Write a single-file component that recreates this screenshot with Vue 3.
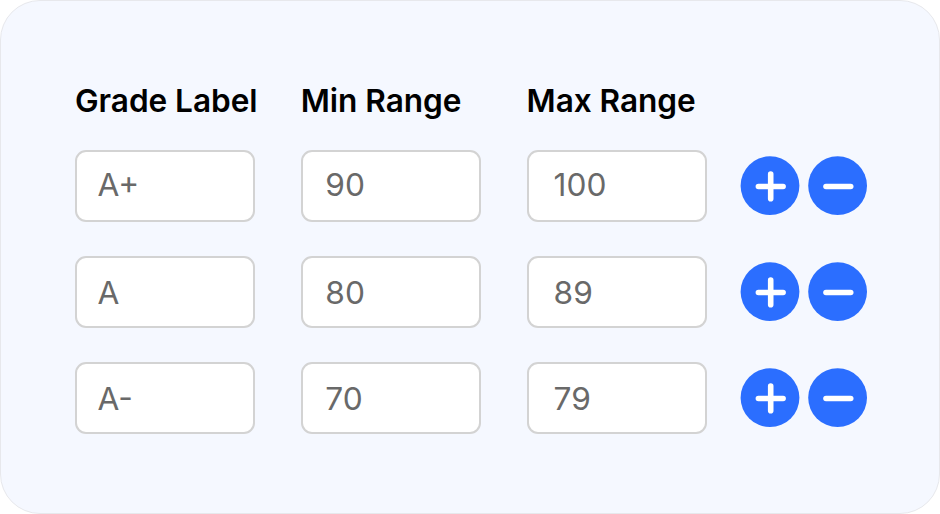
<script setup>
import {ref} from "vue";

const columns = [
    {key: 'label', title: 'Grade Label'},
    {key: 'min', title: 'Min Range'},
    {key: 'max', title: 'Max Range'}
]

const grades = ref([
    {id: 1, label: 'A+', min: '90', max: '100'},
    {id: 2, label: 'A', min: '80', max: '89'},
    {id: 3, label: 'A-', min: '70', max: '79'}
])

let nextId = 4

const addRow = (index) => {
    grades.value.splice(index + 1, 0, {id: nextId++, label: '', min: '', max: ''})
}

const removeRow = (index) => {
    if (grades.value.length > 1) {
        grades.value.splice(index, 1)
    }
}
</script>

<template>
    <div class="card">
        <div class="row head">
            <div v-for="col in columns" :key="col.key" class="title">{{col.title}}</div>
        </div>
        <div v-for="(grade, index) in grades" :key="grade.id" class="row">
            <input v-for="col in columns" :key="col.key" v-model="grade[col.key]" class="value" :class="col.key" :aria-label="col.title"/>
            <div class="actions">
                <button type="button" aria-label="Add" @click="addRow(index)">
                    <svg viewBox="0 0 60 60">
                        <circle cx="30" cy="29.7" r="29.4"/>
                        <path d="M18.4 30.5H43.1M30.7 18.1V42.8"/>
                    </svg>
                </button>
                <button type="button" aria-label="Remove" @click="removeRow(index)">
                    <svg viewBox="0 0 60 60">
                        <circle cx="29.6" cy="29.7" r="29.4"/>
                        <path d="M18 30.5H42.7"/>
                    </svg>
                </button>
            </div>
        </div>
    </div>
</template>

<style>
body {
    margin: 0;
    background: #fff;
}
</style>

<style scoped>
.card {
    box-sizing: border-box;
    width: 940px;
    height: 514px;
    padding: 79px 0 0 74px;
    border: 1px solid #e7e8ec;
    border-radius: 40px;
    background: #f5f8ff;
    font-family: Inter, sans-serif;
}
.row {
    display: grid;
    grid-template-columns: 180.4px 180.4px 180.4px auto;
    column-gap: 45.4px;
    height: 72px;
    margin-bottom: 34px;
}
.head {
    height: 42px;
    margin-bottom: 28px;
}
.title {
    font-size: 31.6px;
    font-weight: 600;
    line-height: 42px;
    letter-spacing: -0.05px;
    white-space: nowrap;
    color: #000;
}
.value {
    box-sizing: border-box;
    width: 100%;
    height: 72px;
    padding: 1px 0 0 20.5px;
    border: 2px solid #d3d3d3;
    border-radius: 11px;
    outline: none;
    background: #fff;
    font-family: inherit;
    font-size: 31.7px;
    color: #696969;
}
.head + .row .value {
    padding-top: 0;
    padding-bottom: 3px;
}
.value.min {
    padding-left: 22.5px;
}
.value.max {
    padding-left: 25px;
}
.actions {
    display: flex;
    gap: 8px;
    margin: 6px 0 0 -12.4px;
}
button {
    width: 60px;
    height: 60px;
    padding: 0;
    border: none;
    border-radius: 50%;
    background: none;
    cursor: pointer;
}
svg {
    display: block;
    width: 60px;
    height: 60px;
    fill: none;
    stroke: #fff;
    stroke-width: 5.6;
    stroke-linecap: round;
}
circle {
    fill: #2b6eff;
    stroke: none;
}
</style>
